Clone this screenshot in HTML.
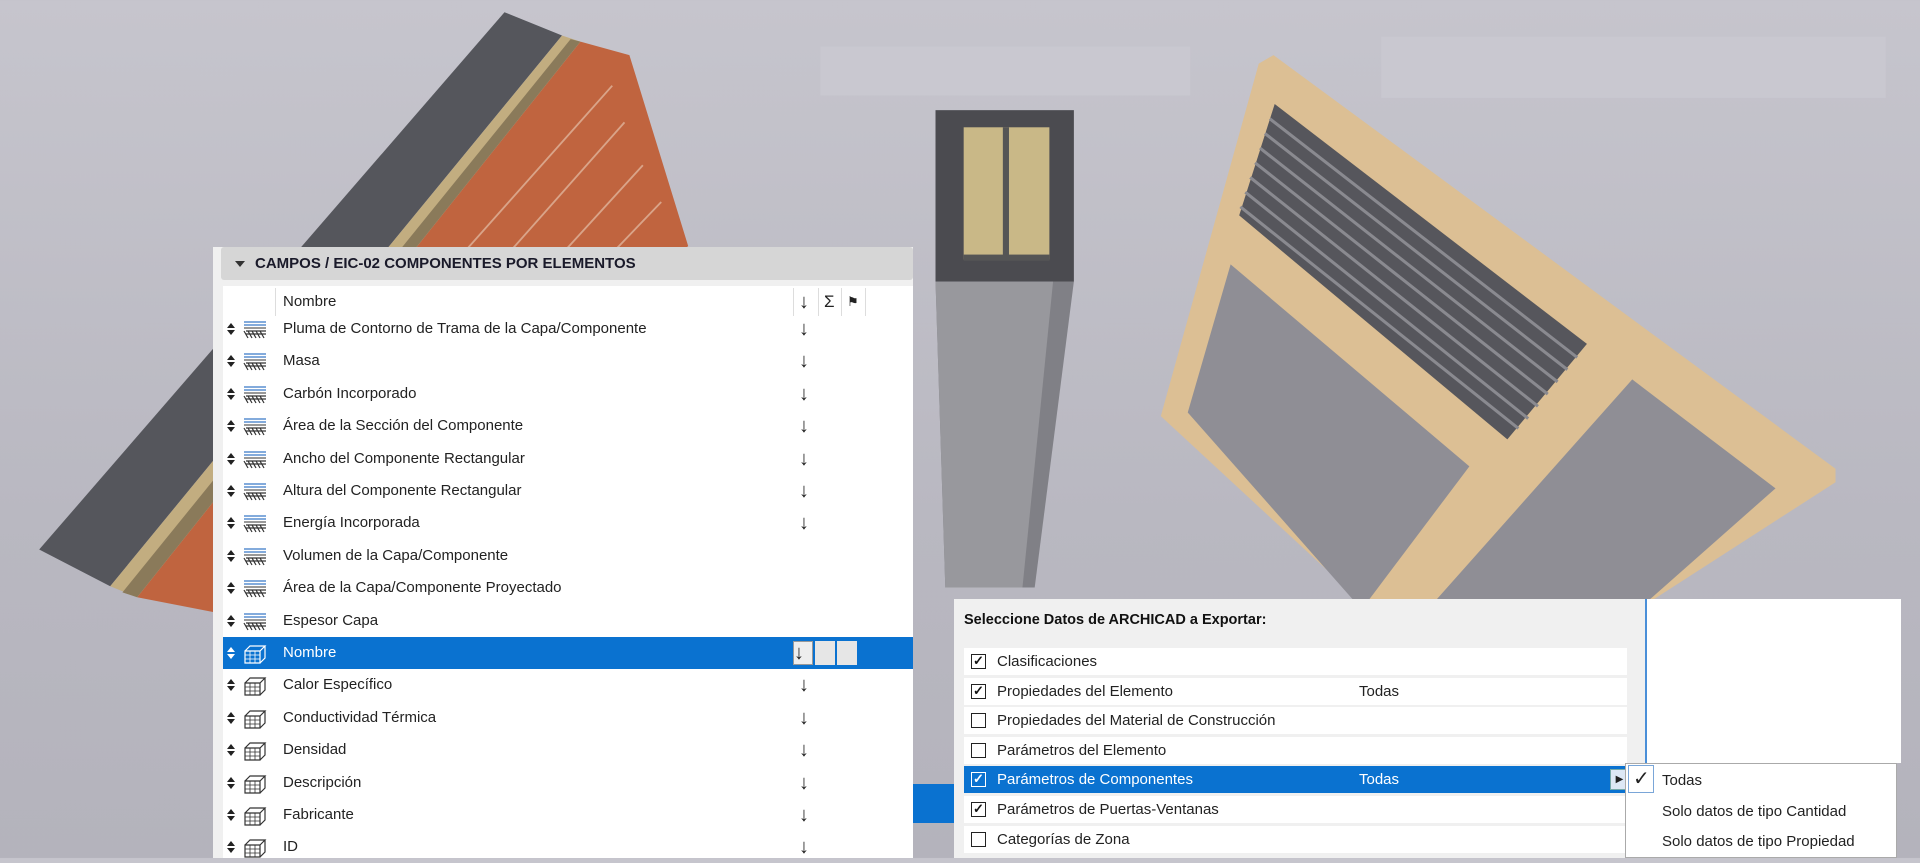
<!DOCTYPE html>
<html><head><meta charset="utf-8"><style>
*{margin:0;padding:0;box-sizing:border-box}
body{width:1920px;height:858px;overflow:hidden;position:relative;font-family:"Liberation Sans",sans-serif;background:linear-gradient(#c6c5cd,#b9b8c1 60%,#b4b3bc)}
svg.bg{position:absolute;left:0;top:0}
.panel{position:absolute;left:213px;top:247px;width:700px;height:611px;background:#f0f0f0}
.hdr{position:absolute;left:8px;top:0;width:692px;height:33px;background:#d6d6d6;border-radius:3px;font-weight:bold;font-size:15px;line-height:33px;padding-left:34px;color:#1a1a2a}
.hdr:before{content:"";position:absolute;left:14px;top:14px;border-left:5px solid transparent;border-right:5px solid transparent;border-top:6px solid #333}
.tbl{position:absolute;left:10px;top:39px;width:690px;height:572px;background:#fff}
.row{position:absolute;left:0;width:690px;height:32px;font-size:15px;line-height:32px;color:#222}
.row .t{position:absolute;left:60px}
.row .a{position:absolute;left:576px;font-size:20px}
.ud{position:absolute;left:4px;top:10px;width:8px;height:12px}
.ud:before{content:"";position:absolute;left:0;top:0;border-left:4px solid transparent;border-right:4px solid transparent;border-bottom:5px solid currentColor}
.ud:after{content:"";position:absolute;left:0;top:7px;border-left:4px solid transparent;border-right:4px solid transparent;border-top:5px solid currentColor}
.row svg{position:absolute;left:20px;top:7px}
.sel{background:#0a72d0;color:#fff}
.dlg{position:absolute;left:954px;top:599px;width:693px;height:259px;background:#f0f0f0;border-right:2px solid #4a8fd8}
.dlg .ttl{position:absolute;left:10px;top:13px;font-size:14.5px;font-weight:bold;color:#111}
.dr{position:absolute;left:10px;width:663px;height:27px;background:#fff;font-size:15px;line-height:27px;color:#222}
.dr .cb{position:absolute;left:7px;top:6px;width:15px;height:15px;border:1.5px solid #222;background:#fff;font-size:13px;line-height:12px;text-align:center;font-weight:bold;color:#111}
.dr .t{position:absolute;left:33px}
.dr .v{position:absolute;left:395px}
.dr.s{background:#0a72d0;color:#fff}
.dr.s .cb{border-color:#fff;background:#0a72d0;color:#fff}
.sub{position:absolute;left:1625px;top:763px;width:272px;height:95px;background:#fff;border:1px solid #aaa;font-size:15px;color:#222}
.sub div{position:absolute;left:36px}
</style></head><body>
<svg class="bg" width="1920" height="858" viewBox="0 0 1568 701" preserveAspectRatio="none">
<rect x="670" y="38" width="302" height="40" fill="#c9c8d0"/>
<rect x="1128" y="30" width="412" height="50" fill="#c9c8d0"/>
<!-- left wall -->
<polygon points="474,34 514,45 562,201 174,560 174,500 112,488" fill="#c0643f"/>
<polygon points="412,10 459,29 90,479 32,449" fill="#55565c"/>
<polygon points="459,29 474,34 112,488 90,479" fill="#c2ad80"/>
<polygon points="466,32 474,34 112,488 100,484" fill="#8a7a5a"/>
<g stroke="#e0b49c" stroke-width="1.5" opacity=".8"><line x1="500" y1="70" x2="180" y2="430"/><line x1="510" y1="100" x2="200" y2="450"/><line x1="525" y1="135" x2="174" y2="520"/><line x1="540" y1="165" x2="200" y2="520"/></g>
<!-- column -->
<polygon points="764,230 877,230 845,480 772,480" fill="#808086"/>
<polygon points="764,230 860,230 835,480 772,480" fill="#98989d"/>
<rect x="764" y="90" width="113" height="140" fill="#4b4b50"/>
<rect x="787" y="104" width="70" height="108" fill="#c9b887"/>
<rect x="819" y="104" width="5" height="108" fill="#555"/>
<rect x="787" y="208" width="70" height="5" fill="#555"/>
<!-- window -->
<polygon points="1028,52 1040,45 1499,383 1499,394 1350,490 1110,490 948,340" fill="#dcbf94"/>
<polygon points="1005,216 1200,381 1118,490 1105,490 970,337" fill="#8f8e95"/>
<polygon points="1333,310 1450,399 1347,490 1173,490" fill="#8f8e95"/>
<polygon points="1041,85 1296,281 1231,359 1012,176" fill="#56565c"/>
<g stroke="#8a8a90" stroke-width="2.5"><line x1="1037" y1="97" x2="1288" y2="292"/><line x1="1033" y1="109" x2="1280" y2="302"/><line x1="1029" y1="121" x2="1272" y2="312"/><line x1="1025" y1="133" x2="1264" y2="322"/><line x1="1021" y1="145" x2="1256" y2="332"/><line x1="1017" y1="157" x2="1248" y2="342"/><line x1="1013" y1="169" x2="1240" y2="350"/></g>
</svg>

<div style="position:absolute;left:912px;top:784px;width:50px;height:39px;background:#0a72d0"></div>

<div class="panel">
<div class="hdr">CAMPOS / EIC-02 COMPONENTES POR ELEMENTOS</div>
<div class="tbl">
<div class="row" style="top:0"><span class="t" style="top:0">Nombre</span><span class="a">↓</span><span style="position:absolute;left:601px;font-size:17px">Σ</span><span style="position:absolute;left:624px;font-size:13px">⚑</span>
<div style="position:absolute;left:570px;top:2px;width:1px;height:28px;background:#ddd"></div><div style="position:absolute;left:595px;top:2px;width:1px;height:28px;background:#ddd"></div><div style="position:absolute;left:618px;top:2px;width:1px;height:28px;background:#ddd"></div><div style="position:absolute;left:642px;top:2px;width:1px;height:28px;background:#ddd"></div><div style="position:absolute;left:52px;top:2px;width:1px;height:28px;background:#ddd"></div></div>
</div>
</div>

<div id="rows" style="position:absolute;left:223px;top:0"></div>

<div class="dlg"><div class="ttl">Seleccione Datos de ARCHICAD a Exportar:</div></div>
<div style="position:absolute;left:1647px;top:599px;width:254px;height:164px;background:#fff"></div>

<div class="sub">
<div style="left:2px;top:1px;width:26px;height:28px;border:1px solid #7aa6d8"></div>
<div style="left:7px;top:2px;font-size:20px">✓</div>
<div style="top:8px">Todas</div>
<div style="top:39px">Solo datos de tipo Cantidad</div>
<div style="top:69px">Solo datos de tipo Propiedad</div>
</div>

<script>
const L=["Pluma de Contorno de Trama de la Capa/Componente","Masa","Carbón Incorporado","Área de la Sección del Componente","Ancho del Componente Rectangular","Altura del Componente Rectangular","Energía Incorporada","Volumen de la Capa/Componente","Área de la Capa/Componente Proyectado","Espesor Capa","Nombre","Calor Específico","Conductividad Térmica","Densidad","Descripción","Fabricante","ID"];
const ar=[1,1,1,1,1,1,1,0,0,0,1,1,1,1,1,1,1];
const layer='<svg width="24" height="20" viewBox="0 0 24 20"><line x1="1" y1="2" x2="23" y2="2" stroke="#5a8fd0" stroke-width="1.5"/><line x1="1" y1="5" x2="23" y2="5" stroke="#5a8fd0" stroke-width="1.5"/><line x1="1" y1="8" x2="23" y2="8" stroke="#333"/><path d="M1 11l4 7M5 11l4 7M9 11l4 7M13 11l4 7M17 11l4 7M3 11h20M3 14h20" stroke="#333" stroke-width="1.2" fill="none"/></svg>';
const cube=c=>`<svg width="24" height="20" viewBox="0 0 24 20"><path d="M2 7h15v12H2zM2 7l5-5h15l-5 5M22 2v12l-5 5" fill="none" stroke="${c}" stroke-width="1.2"/><path d="M2 11h15M2 15h15M7 7v12M12 7v12" stroke="${c}" stroke-width=".8"/></svg>`;
let h='';
L.forEach((t,i)=>{const top=313+32.4*i;const s=i==10;
h+=`<div class="row${s?' sel':''}" style="top:${top}px;width:690px"><span class="ud"></span>${i<10?layer:cube(s?'#fff':'#333')}<span class="t">${t}</span>${ar[i]?'<span class="a">↓</span>':''}${s?'<span style="position:absolute;left:570px;top:4px;width:20px;height:24px;background:#eee;border:1px solid #999"></span><span style="position:absolute;left:571px;color:#222;font-size:20px">↓</span><span style="position:absolute;left:592px;top:4px;width:20px;height:24px;background:#e6e6e6"></span><span style="position:absolute;left:614px;top:4px;width:20px;height:24px;background:#e6e6e6"></span>':''}</div>`;});
document.getElementById('rows').innerHTML=h;
const D=[["Clasificaciones",1,""],["Propiedades del Elemento",1,"Todas"],["Propiedades del Material de Construcción",0,""],["Parámetros del Elemento",0,""],["Parámetros de Componentes",1,"Todas"],["Parámetros de Puertas-Ventanas",1,""],["Categorías de Zona",0,""]];
let g='';
D.forEach((d,i)=>{g+=`<div class="dr${i==4?' s':''}" style="top:${49+29.6*i}px"><span class="cb">${d[1]?'✓':''}</span><span class="t">${d[0]}</span><span class="v">${d[2]}</span>${i==4?'<span style="position:absolute;left:646px;top:3px;width:19px;height:21px;background:#dde8f5;border:1px solid #7aa;color:#222;font-size:10px;line-height:19px;text-align:center">▶</span>':''}</div>`});
document.querySelector('.dlg').insertAdjacentHTML('beforeend',g);
</script>
</body></html>
